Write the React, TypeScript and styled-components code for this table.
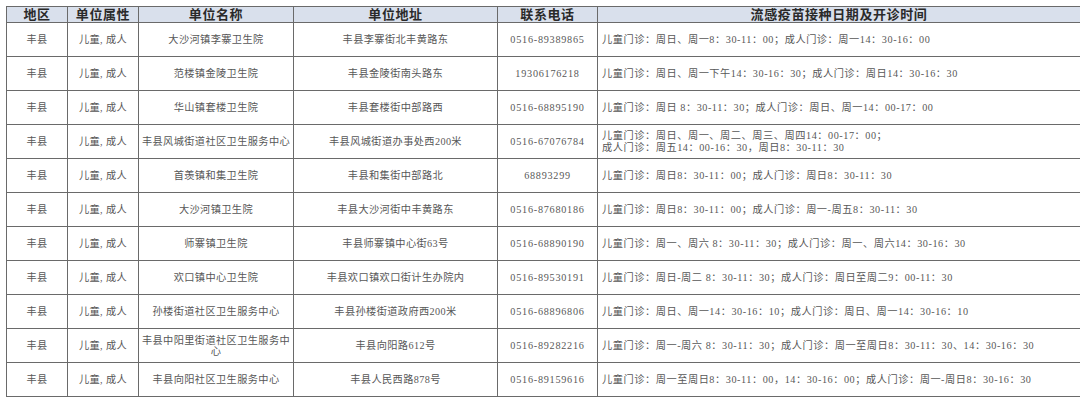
import React from 'react';
import styled, { createGlobalStyle } from 'styled-components';

const GlobalStyle = createGlobalStyle`
  html, body {
    margin: 0;
    padding: 0;
    background: #ffffff;
  }
`;

const Page = styled.div`
  width: 1080px;
  height: 402px;
  padding: 6px 0 0 6px;
  box-sizing: border-box;
  background: #ffffff;
`;

const Table = styled.table`
  border-collapse: collapse;
  table-layout: fixed;
  width: 1068px;
  font-family: 'Liberation Serif', 'Noto Sans CJK SC', serif;
`;

const HeadCell = styled.th<{ $w: number }>`
  width: ${(p) => p.$w}px;
  height: 15px;
  padding: 0;
  background: #d9e0ec;
  border: 1px solid #6a6a6a;
  font-size: 13px;
  font-weight: 700;
  line-height: 15px;
  color: #2a2a2a;
  text-align: center;
  letter-spacing: 0.6px;
`;

const Row = styled.tr`
  height: 34px;
`;

const Cell = styled.td<{ $left?: boolean; $ls?: number }>`
  padding: 0 2px 0 ${(p) => (p.$left ? '4px' : '2px')};
  border: 1px solid #6a6a6a;
  font-size: 10.2px;
  letter-spacing: ${(p) => p.$ls ?? 0.4}px;
  line-height: 11px;
  color: #575757;
  text-align: ${(p) => (p.$left ? 'left' : 'center')};
  vertical-align: middle;
  white-space: ${(p) => (p.$left ? 'nowrap' : 'normal')};
  overflow: hidden;
`;

const Line = styled.div`
  line-height: 12px;
`;

const columns = [
  { title: '地区', w: 60 },
  { title: '单位属性', w: 70 },
  { title: '单位名称', w: 154 },
  { title: '单位地址', w: 203 },
  { title: '联系电话', w: 99 },
  { title: '流感疫苗接种日期及开诊时间', w: 482 },
];

const rows = [
  {
    name: '大沙河镇李寨卫生院',
    addr: '丰县李寨街北丰黄路东',
    tel: '0516-89389865',
    time: ['儿童门诊：周日、周一8：30-11：00；成人门诊：周一14：30-16：00'],
  },
  {
    name: '范楼镇金陵卫生院',
    addr: '丰县金陵街南头路东',
    tel: '19306176218',
    time: ['儿童门诊：周日、周一下午14：30-16：30；成人门诊：周日14：30-16：30'],
  },
  {
    name: '华山镇套楼卫生院',
    addr: '丰县套楼街中部路西',
    tel: '0516-68895190',
    time: ['儿童门诊：周日 8：30-11：30；成人门诊：周日、周一14：00-17：00'],
  },
  {
    name: '丰县风城街道社区卫生服务中心',
    addr: '丰县风城街道办事处西200米',
    tel: '0516-67076784',
    time: [
      '儿童门诊：周日、周一、周二、周三、周四14：00-17：00；',
      '成人门诊：周五14：00-16：30，周日8：30-11：30',
    ],
  },
  {
    name: '首羡镇和集卫生院',
    addr: '丰县和集街中部路北',
    tel: '68893299',
    time: ['儿童门诊：周日8：30-11：00；成人门诊：周日8：30-11：30'],
  },
  {
    name: '大沙河镇卫生院',
    addr: '丰县大沙河街中丰黄路东',
    tel: '0516-87680186',
    time: ['儿童门诊：周日8：30-11：00；成人门诊：周一-周五8：30-11：30'],
  },
  {
    name: '师寨镇卫生院',
    addr: '丰县师寨镇中心街63号',
    tel: '0516-68890190',
    time: ['儿童门诊：周一、周六 8：30-11：30；成人门诊：周一、周六14：30-16：30'],
  },
  {
    name: '欢口镇中心卫生院',
    addr: '丰县欢口镇欢口街计生办院内',
    tel: '0516-89530191',
    time: ['儿童门诊：周日-周二 8：30-11：30；成人门诊：周日至周二9：00-11：30'],
  },
  {
    name: '孙楼街道社区卫生服务中心',
    addr: '丰县孙楼街道政府西200米',
    tel: '0516-68896806',
    time: ['儿童门诊：周日、周一14：30-16：10；成人门诊：周日、周一14：30-16：10'],
  },
  {
    name: '丰县中阳里街道社区卫生服务中心',
    addr: '丰县向阳路612号',
    tel: '0516-89282216',
    time: ['儿童门诊：周一-周六 8：30-11：30；成人门诊：周一至周日8：30-11：30、14：30-16：30'],
  },
  {
    name: '丰县向阳社区卫生服务中心',
    addr: '丰县人民西路878号',
    tel: '0516-89159616',
    time: ['儿童门诊：周一至周日8：30-11：00，14：30-16：00；成人门诊：周一-周日8：30-16：30'],
  },
];

const App = () => {
  return (
    <Page>
      <GlobalStyle />
      <Table>
        <thead>
          <tr>
            {columns.map((c) => (
              <HeadCell key={c.title} $w={c.w}>
                {c.title}
              </HeadCell>
            ))}
          </tr>
        </thead>
        <tbody>
          {rows.map((r) => (
            <Row key={r.name}>
              <Cell>丰县</Cell>
              <Cell>儿童, 成人</Cell>
              <Cell>{r.name}</Cell>
              <Cell>{r.addr}</Cell>
              <Cell $ls={0.75}>{r.tel}</Cell>
              <Cell $left $ls={0.55}>
                {r.time.map((t) => (
                  <Line key={t}>{t}</Line>
                ))}
              </Cell>
            </Row>
          ))}
        </tbody>
      </Table>
    </Page>
  );
};

export default App;
